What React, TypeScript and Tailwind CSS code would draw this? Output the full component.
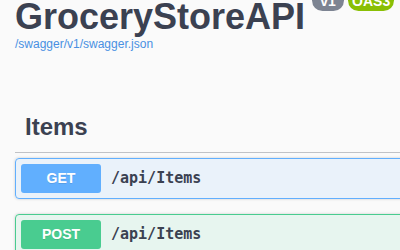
import React from "react";

function Op({ method, color, bg, path }: { method: string; color: string; bg: string; path: string }) {
  return (
    <div
      className="mb-[15px] rounded-[4px] border shadow-[0_0_3px_rgba(0,0,0,0.19)]"
      style={{ borderColor: color, backgroundColor: bg }}
    >
      <div className="flex items-center p-[5px]">
        <span
          className="w-[80px] rounded-[3px] py-[6px] text-center text-[14px] font-bold leading-[17px] text-white [text-shadow:0_1px_0_rgba(0,0,0,0.1)] font-['Liberation_Sans',Arial,sans-serif]"
          style={{ backgroundColor: color }}
        >
          {method}
        </span>
        <span className="px-[10px] text-[15px] font-semibold text-[#3b4151] font-['DejaVu_Sans_Mono',monospace]">
          {path}
        </span>
      </div>
    </div>
  );
}

export default function App() {
  return (
    <div className="h-[250px] w-[400px] overflow-hidden bg-[#fafafa] font-['Liberation_Sans',Arial,sans-serif]">
      <div className="-mt-[4px] w-[460px] pl-[15px]">
        <div className="flex items-start">
          <h2 className="text-[36px] font-bold leading-[41px] text-[#3b4151]">GroceryStoreAPI</h2>
          <span className="ml-[7px] -mt-[6px] flex h-[21px] w-[32px] items-center justify-center rounded-full bg-[#7d8492] text-[14px] font-bold leading-[16px] text-white">
            v1
          </span>
          <span className="ml-[4px] -mt-[6px] flex h-[21px] w-[46px] items-center justify-center rounded-full bg-[#89bf04] text-[14px] font-bold leading-[16px] text-white">
            OAS3
          </span>
        </div>
        <a className="block text-[12px] leading-[14px] text-[#4990e2]">/swagger/v1/swagger.json</a>
        <h3 className="mt-[52px] mb-[5px] border-b border-[rgba(59,65,81,0.3)] pt-[10px] pb-[11px] pl-[10px] text-[24px] font-bold leading-[28px] text-[#3b4151]">
          Items
        </h3>
        <Op method="GET" color="#61affe" bg="rgba(97,175,254,0.1)" path="/api/Items" />
        <Op method="POST" color="#49cc90" bg="rgba(73,204,144,0.1)" path="/api/Items" />
      </div>
    </div>
  );
}
